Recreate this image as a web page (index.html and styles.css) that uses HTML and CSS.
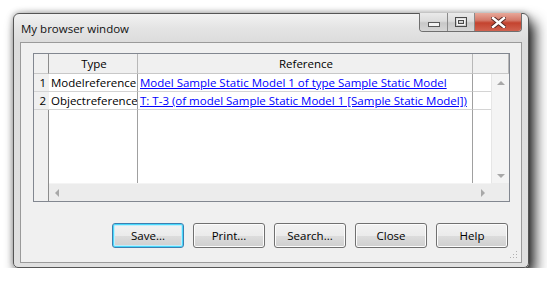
FILE: index.html
```html
<!DOCTYPE html>
<html lang="en">
<head>
    <meta charset="UTF-8">
    <title>My browser window</title>
    <link rel="stylesheet" href="styles.css">
</head>
<body>
    <div class="window">
        <div class="titlebar">
            <span class="title">My browser window</span>
            <div class="caption-buttons">
                <div class="cap-btn cap-min">
                    <svg width="12" height="5" viewBox="0 0 12 5"><rect x="0.5" y="0.5" width="11" height="4" fill="#f4f4f4" stroke="#5a5a5a"/></svg>
                </div>
                <div class="cap-btn cap-max">
                    <svg width="12" height="10" viewBox="0 0 12 10"><rect x="0.5" y="0.5" width="11" height="9" fill="none" stroke="#4a4a4a"/><rect x="2.5" y="2.5" width="7" height="5" fill="none" stroke="#f4f4f4" stroke-width="1"/><rect x="3.5" y="3.5" width="5" height="3" fill="none" stroke="#4a4a4a"/></svg>
                </div>
                <div class="cap-btn cap-close">
                    <svg width="15" height="11" viewBox="0 0 15 11"><path d="M2 1 L13 10 M13 1 L2 10" stroke="#5a2a26" stroke-width="4.4" stroke-linecap="square"/><path d="M2 1 L13 10 M13 1 L2 10" stroke="#ffffff" stroke-width="2.4" stroke-linecap="square"/></svg>
                </div>
            </div>
        </div>

        <div class="client">
            <div class="grid">
                <div class="grid-row grid-head">
                    <div class="cell rownum"></div>
                    <div class="cell col-type head-cell">Type</div>
                    <div class="cell col-ref head-cell">Reference</div>
                    <div class="cell col-rest"></div>
                </div>
                <div class="grid-body">
                    <div class="rownums">
                        <div class="cell rownum">1</div>
                        <div class="cell rownum">2</div>
                    </div>
                    <div class="grid-main">
                        <div class="grid-rows">
                            <div class="grid-row">
                                <div class="cell col-type">Modelreference</div>
                                <div class="cell col-ref"><a href="#">Model Sample Static Model 1 of type Sample Static Model</a></div>
                                <div class="cell col-fill"></div>
                            </div>
                            <div class="grid-row">
                                <div class="cell col-type">Objectreference</div>
                                <div class="cell col-ref"><a href="#">T: T-3 (of model Sample Static Model 1 [Sample Static Model])</a></div>
                                <div class="cell col-fill"></div>
                            </div>
                            <div class="grid-row grid-empty">
                                <div class="cell col-type"></div>
                                <div class="cell col-ref"></div>
                                <div class="cell col-fill"></div>
                            </div>
                        </div>
                        <div class="hscroll">
                            <span class="arrow arrow-left"></span>
                            <span class="arrow arrow-right"></span>
                        </div>
                    </div>
                    <div class="vscroll-col">
                        <div class="vscroll">
                            <span class="arrow arrow-up"></span>
                            <span class="arrow arrow-down"></span>
                        </div>
                        <div class="corner"></div>
                    </div>
                </div>
            </div>

            <div class="buttons">
                <button class="btn btn-default">Save...</button>
                <button class="btn">Print...</button>
                <button class="btn">Search...</button>
                <button class="btn">Close</button>
                <button class="btn">Help</button>
            </div>

            <svg class="grip" width="8" height="8" viewBox="0 0 8 8">
                <rect x="6" y="0" width="1" height="1" fill="#b0b0b0"/>
                <rect x="3" y="3" width="1" height="1" fill="#b0b0b0"/>
                <rect x="6" y="3" width="1" height="1" fill="#b0b0b0"/>
                <rect x="0" y="6" width="1" height="1" fill="#b0b0b0"/>
                <rect x="3" y="6" width="1" height="1" fill="#b0b0b0"/>
                <rect x="6" y="6" width="1" height="1" fill="#b0b0b0"/>
            </svg>
        </div>
    </div>
</body>
</html>
```

FILE: styles.css
```css
body {
    margin: 0;
    background-color: #ffffff;
    font-family: "Open Sans", "Noto Sans", sans-serif;
    font-size: 11px;
    color: #000;
}

.window {
    margin: 13px 0 0 13px;
    width: 516px;
    height: 255px;
    box-sizing: border-box;
    border: 1px solid #555;
    border-radius: 6px 6px 5px 5px;
    padding: 0 6px 4px 6px;
    background: linear-gradient(to bottom, #f2f2f2 0, #e4e4e4 14px, #dcdcdc 28px, #e0e0e0 100%);
    box-shadow: 6px 8px 14px rgba(0, 0, 0, 0.85), 0 0 6px rgba(0, 0, 0, 0.35);
    display: flex;
    flex-direction: column;
}

.titlebar {
    height: 28px;
    display: flex;
    justify-content: space-between;
    align-items: flex-start;
}

.title {
    margin-top: 7px;
    padding-left: 1px;
    font-size: 11.5px;
    color: #111;
}

.caption-buttons {
    display: flex;
    margin-top: -1px;
    height: 19px;
    border: 1px solid #6f6f6f;
    border-top: none;
    border-radius: 0 0 4px 4px;
    overflow: hidden;
    box-sizing: border-box;
}

.cap-btn {
    display: flex;
    align-items: center;
    justify-content: center;
    height: 18px;
    background: linear-gradient(to bottom, #eaeaea 0, #dcdcdc 45%, #c8c8c8 55%, #d6d6d6 100%);
}

.cap-min {
    width: 27px;
    border-right: 1px solid #8a8a8a;
}

.cap-min svg {
    margin-top: 5px;
}

.cap-max {
    width: 26px;
    border-right: 1px solid #8a8a8a;
}

.cap-close {
    width: 46px;
    background: linear-gradient(to bottom, #e8a899 0, #d47a6a 40%, #c4432f 55%, #d0624f 100%);
}

.client {
    position: relative;
    flex: 1;
    border: 1px solid #9a9a9a;
    background-color: #f0f0f0;
    padding: 10px 11px 0 12px;
}

/* data grid */
.grid {
    width: 477px;
    height: 149px;
    box-sizing: border-box;
    border: 1px solid #828790;
    background-color: #fff;
    display: flex;
    flex-direction: column;
}

.grid-row {
    display: flex;
}

.cell {
    box-sizing: border-box;
    height: 18px;
    line-height: 17px;
    border-right: 1px solid #a0a0a0;
    border-bottom: 1px solid #d4d4d4;
    white-space: nowrap;
    overflow: hidden;
}

.grid-head .cell {
    height: 20px;
    line-height: 19px;
    background-color: #f0f0f0;
    border-bottom: 1px solid #c8c8c8;
    border-right: 1px solid #b8b8b8;
}

.head-cell {
    text-align: center;
    font-size: 11.5px;
}

.rownum {
    width: 15px;
    background-color: #f0f0f0;
    text-align: right;
    padding-right: 3px;
    border-right: 1px solid #8c8c8c;
    font-size: 11.5px;
}

.grid-head .rownum {
    border-right: 1px solid #8c8c8c;
}

.col-type {
    width: 89px;
    padding-left: 2px;
    font-size: 11.5px;
}

.col-ref {
    width: 335px;
    padding-left: 2px;
    font-size: 11.5px;
}

.col-ref a {
    color: #0000ff;
    text-decoration: underline;
}

.col-rest {
    flex: 1;
    border-right: none;
}

.col-fill {
    width: 18px;
    border-right: none;
}

.grid-body {
    flex: 1;
    display: flex;
}

.rownums {
    width: 15px;
    box-sizing: border-box;
    background-color: #f0f0f0;
    border-right: 1px solid #8c8c8c;
}

.rownums .cell {
    border-right: none;
    border-bottom: 1px solid #d4d4d4;
}

.grid-main {
    width: 442px;
    display: flex;
    flex-direction: column;
}

.grid-rows {
    flex: 1;
    display: flex;
    flex-direction: column;
}

.grid-empty {
    flex: 1;
}

.grid-empty .cell {
    height: auto;
    border-bottom: none;
}

.hscroll {
    height: 17px;
    background-color: #ececec;
    border-top: 1px solid #f4f4f4;
    display: flex;
    justify-content: space-between;
    align-items: center;
    padding: 0 6px;
}

.vscroll-col {
    width: 18px;
    display: flex;
    flex-direction: column;
}

.vscroll {
    flex: 1;
    background-color: #f4f4f4;
    display: flex;
    flex-direction: column;
    justify-content: space-between;
    align-items: center;
    padding: 7px 0 5px;
    border-left: 1px solid #e6e6e6;
}

.corner {
    height: 18px;
    background-color: #ececec;
}

.arrow {
    width: 0;
    height: 0;
    border: 4px solid transparent;
}

.arrow-left {
    border-right-color: #a8a8a8;
    border-left-width: 0;
}

.arrow-right {
    border-left-color: #a8a8a8;
    border-right-width: 0;
}

.arrow-up {
    border-bottom-color: #a8a8a8;
    border-top-width: 0;
}

.arrow-down {
    border-top-color: #a8a8a8;
    border-bottom-width: 0;
}

/* buttons */
.buttons {
    display: flex;
    justify-content: flex-end;
    gap: 9px;
    margin-top: 21px;
    padding-right: 2px;
}

.btn {
    width: 72px;
    height: 25px;
    border: 1px solid #707070;
    border-radius: 3px;
    background: linear-gradient(to bottom, #f2f2f2 0, #ebebeb 50%, #dddddd 50%, #cfcfcf 100%);
    box-shadow: inset 0 0 0 1px #fcfcfc;
    font-family: "Open Sans", "Noto Sans", sans-serif;
    font-size: 11.5px;
    color: #000;
    padding: 0;
}

.btn-default {
    border-color: #3c7fb1;
    box-shadow: inset 0 0 0 1px #48d8fb, inset 0 0 0 2px #c0ecfb;
}

.grip {
    position: absolute;
    right: 3px;
    bottom: 3px;
}
```
